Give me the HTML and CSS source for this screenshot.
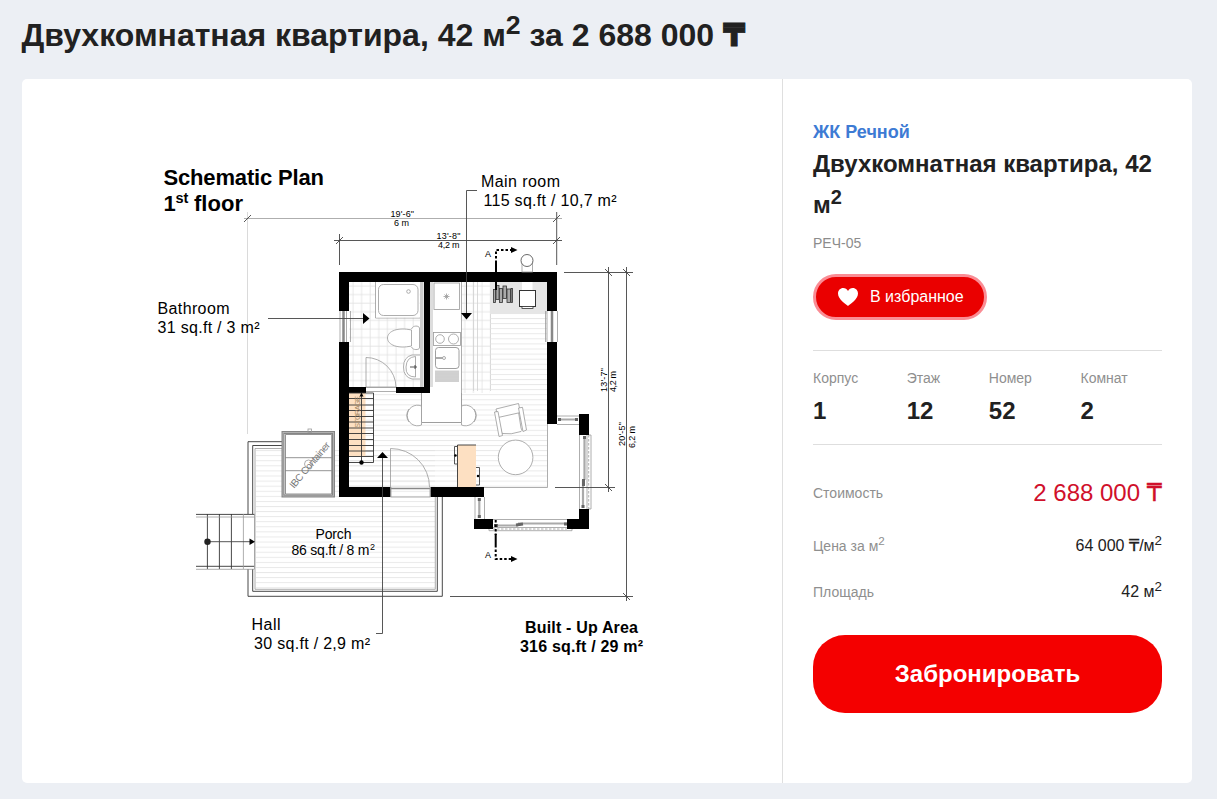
FILE: index.html
```html
<!DOCTYPE html>
<html lang="ru">
<head>
<meta charset="utf-8">
<title>Двухкомнатная квартира</title>
<link rel="stylesheet" href="styles.css">
</head>
<body>
<h1 class="page-title">Двухкомнатная квартира, 42 м<sup>2</sup> за 2 688 000 <span class="tenge">₸</span></h1>
<main class="card">
<section class="plan">
<svg class="plan-svg" viewBox="22 79 760 704" width="760" height="704">
<defs>
<pattern id="tile" x="349" y="282" width="8.6" height="8.6" patternUnits="userSpaceOnUse"><path d="M4 0V8.6M0 4H8.6" class="faint"/></pattern>
<pattern id="floor" x="0" y="282.5" width="20" height="5.08" patternUnits="userSpaceOnUse"><path d="M0 .5H20" class="faint"/></pattern>
</defs>
<!-- floors -->
<rect x="349" y="282" width="72" height="105" fill="url(#tile)"/>
<rect x="461" y="282" width="29" height="111" fill="url(#tile)"/>
<path d="M473.5 282V391M477.5 282V391M490.5 282V391" class="light"/>
<rect x="490" y="314" width="57" height="79" fill="url(#floor)"/>
<rect x="349" y="393" width="198" height="94" fill="url(#floor)"/>
<rect x="256" y="446" width="179" height="143" fill="url(#floor)"/>
<path d="M547.5 424V487.5H484" class="mid"/>
<rect x="490" y="282" width="57" height="32" fill="#e6e6e6"/>
<rect x="420" y="282" width="3.5" height="105" fill="#ccc"/>
<rect x="430" y="282" width="3" height="105" fill="#ddd"/>
<!-- porch -->
<path d="M282 441.7H248V514M248 569V596.3H442.3V497M282 445.5H252.7V514M252.7 569V591.3H437.3V497" class="dark"/>
<path d="M282 448.5H255V589.3H435.3V497" class="mid"/>
<path d="M196 514.4H254.500M196 566.3H254.500M207.400 514V569M219.400 514V569M231.400 514V569" class="dark"/>
<path d="M196 517H254.500M196 569.300H254.500M243.400 514V569M254.500 514V569" class="mid"/>
<path d="M207.500 541.700H250" class="line"/><circle cx="207.500" cy="541.700" r="3.200" fill="#222"/><path d="M249.500 538.500L255 541.700L249.500 545Z"/>
<!-- tank -->
<rect x="283" y="432.500" width="50.500" height="63.500" fill="#fff" stroke="#858585" stroke-width="3"/>
<rect x="283" y="432.500" width="50.500" height="63.500" fill="none" stroke="#bbb" stroke-width=".8"/>
<path d="M285.500 434.500H331.700V494H285.500ZM285.500 457.700H331.700M285.500 470.700H331.700" class="tank-line"/>
<rect x="308" y="429" width="3.500" height="3.500" class="mid"/>
<circle cx="308.500" cy="464" r="4" class="mid"/>
<text transform="translate(294 489) rotate(-50)" font-size="10" textLength="57" fill="#777">IBC Container</text>
<!-- outer walls -->
<path d="M339 272H557V311H547V282H349V311H339ZM339 342H349V387H366V393H349V487H390.500V497H339ZM547 342H557V424H547ZM424 282H430V393H396V387H424ZM430.500 487H484V497H430.500ZM579 414H589V435H579ZM579 509H589V529H567V519H579ZM474 519H493V529H474Z"/>
<!-- windows and doors -->
<path d="M340 311V342M346.500 311V342M350.500 311V342M547 311V342M557.500 311V342M545.500 311V342M366 387.500H396M366 391.500H396" class="mid"/>
<path d="M343.500 311V342M552 311V342" stroke="#888" stroke-width="2.500"/>
<path d="M390.500 488.500H430.500" stroke="#888" stroke-width="1.500"/><path d="M390.500 497H430.500M391 487V497M430 487V497" class="mid"/>
<path d="M557 416H579M557 424.500H579M579.500 435V509M587 435V509M589 435H591V509H589M493 519.500H567M493 527.500H567M489 529V530.700H572V529M475 497V519M484.500 497V519" class="mid"/>
<path d="M558 419.500H578M584.500 436V480M583 480V508M494 525.500H518M518 523.500H567M479.300 498V518" stroke="#aaa" stroke-width="2.200" fill="none"/>
<path d="M558 419.500H561M575 419.500H578M584.500 436V439M583.500 479V486M583 505V508M494 525.500H498M516 525L523 524M564 524H567M479.300 498V501M479.300 515V518" stroke="#666" stroke-width="3"/>
<path d="M588.700 435V509M493 529H567" class="mid" stroke-dasharray="2.500 1.500"/>
<!-- bathroom -->
<path d="M375.500 282V318H420" class="mid"/><rect x="376" y="282.500" width="43.500" height="35" fill="#fff"/>
<rect x="378.500" y="284.500" width="39.500" height="31" rx="5" class="fix"/><circle cx="408.500" cy="291.500" r="1.800" class="fix"/>
<path d="M411.500 330C398 327 387.500 331 387.500 338S398 349 411.500 346ZM411.500 329C413 325 419 325.500 419.500 328V348C419 350 413 350.500 411.500 347" class="fix"/>
<path d="M420 355L412 355Q403.500 357 403.500 367T412 379L420 379M415.500 356.500Q406.500 357 406 367T415.500 377Z" class="fix"/><path d="M410 367H417M415 365V369" class="line"/>
<path d="M366 387V357.500A30 30 0 0 1 396 387Z" class="fix clear"/>
<!-- kitchen -->
<rect x="433" y="282" width="28.500" height="111" fill="#fff" stroke="none"/>
<path d="M461.500 282V422.500H421.500V393" class="mid"/>
<rect x="434" y="283" width="25.500" height="26.500" class="fix"/><path d="M443.500 296.500H449.500M446.500 293.500V299.500M444.500 294.500L448.500 298.500M448.500 294.500L444.500 298.500" class="mid"/>
<rect x="433.500" y="332.500" width="27" height="13" class="fix"/><circle cx="440" cy="339" r="4.300" class="fix"/><circle cx="453.500" cy="339" r="5" class="fix"/>
<rect x="435.500" y="347.500" width="23.500" height="21" rx="3" class="fix strong"/><path d="M436 358H443" class="line"/><circle cx="444" cy="358" r="1.500" class="fix"/>
<rect x="435" y="370.500" width="24" height="11.500" fill="#d0d0d0"/><path d="M435 372.500H459M435 375.500H459M435 378.500H459" class="light"/>
<path d="M430 393.500H461V422H422V393.500Z" fill="#fff"/><path d="M461.500 393V422.500H421.500V393" class="mid"/>
<path d="M421.500 406A10.300 10.300 0 1 0 421.500 425V422.500Z" class="fix"/><path d="M461.500 406A10.300 10.300 0 1 1 461.500 425V422.500Z" class="fix"/>
<path d="M409 409Q404.500 415.500 409 422M474 409Q478.500 415.500 474 422" class="fix clear"/>
<!-- stove and firewood -->
<rect x="522" y="260" width="10.500" height="12" class="fix"/><rect x="522" y="282" width="10.500" height="10" fill="#fff"/>
<circle cx="527" cy="260.500" r="6" fill="#fff" stroke="#444" stroke-width=".8"/>
<rect x="519.500" y="290.500" width="16" height="16" fill="#fff" stroke="#333"/><rect x="522" y="306.500" width="11" height="2" fill="#fff" stroke="#333" stroke-width=".8"/>
<g fill="#aaa" stroke="#333" stroke-width=".8"><rect x="493.500" y="289.500" width="2" height="13"/><rect x="496" y="285.500" width="3" height="14"/><rect x="499.500" y="288.500" width="3" height="14"/><rect x="503" y="286" width="3.500" height="12.500"/><rect x="507" y="289" width="3.500" height="13.500"/><rect x="511" y="288.500" width="1.500" height="14"/></g>
<!-- storage stair -->
<rect x="349" y="393" width="16.500" height="63" fill="#fde0c2"/>
<path d="M349 393H373.500V462.500H349M349 398.500H373.500M349 405H373.500M349 410.500H373.500M349 416.500H373.500M349 422H373.500M349 428H373.500M349 433.500H373.500M349 439.500H373.500M349 445.500H373.500M349 451H373.500M349 456.500H373.500M361.500 462V395" class="dark"/>
<text transform="translate(359.500 428) rotate(-90)" font-size="7.500" textLength="32" fill="#a78b69">STORAGE</text>
<circle cx="361.500" cy="462.500" r="2.200"/><path d="M359.500 396.500L361.500 392.500L363.500 396.500Z"/>
<path d="M390.500 487V448.500A39 38.500 0 0 1 429.500 487" class="fix clear"/>
<!-- cabinet -->
<rect x="457.500" y="445" width="18.500" height="42" fill="#fde0c2"/><path d="M457.500 487V445H476" class="dark"/>
<path d="M457 446.500H454.500V464H457M476 467.500H479.500V485H476" class="line"/><circle cx="455.500" cy="455.500" r="1.200"/><circle cx="478" cy="476" r="1.200"/>
<!-- armchair and table -->
<circle cx="515.600" cy="457.400" r="17.300" class="fix"/>
<path d="M496 411.500L517.500 405.500L521 428Q523 431 521 431.500Q511 435 502 433.500Z" class="fix"/>
<path d="M496 409L518.500 403.500L520.500 412.500L498 417.500Z" class="fix"/>
<path d="M494.500 412L498 411.500L502.500 435.500L499 436.500ZM518.500 408L522.500 407.300L526.500 430L523 431.500Z" class="fix"/>
<!-- dimensions -->
<path d="M247.500 212V434" class="light"/><path d="M244 218.500H562" class="mid"/>
<path d="M334 240.500H562M339.500 234V265M556.700 212V265M564 272.500H633M555 487.500H615M450 596.500H633M608.500 267V492M626.500 267V601" class="line"/>
<path d="M244 222L251 215M336 244L343 237M553 222L560 215M553 244L560 237M605 269L612 276M623 269L630 276M605 484L612 491M623 593L630 600" class="line"/>
<!-- leaders -->
<path d="M268 318.500H364M477 190.500H466.500V314M382.500 457V633.500H376" class="line"/>
<path d="M363 313L369.500 318.500L363 324ZM461 313H472L466.500 319.500ZM377 458H388L382.500 452Z"/>
<!-- section marks -->
<path d="M496 263V250H512M495.700 545V559H512M495.700 520V535" fill="none" stroke="#000" stroke-width="2" stroke-dasharray="2.500 2"/>
<path d="M496 263V272M495.700 534V545M496 282V290" stroke="#000" stroke-width="2"/>
<path d="M511 247L517.500 250L511 253ZM511 556L517.500 559L511 562Z"/>
<!-- captions -->
<g font-size="16">
<g font-weight="bold"><text x="163.500" y="185" font-size="22" textLength="160.500">Schematic Plan</text><text x="163.500" y="210.500" font-size="22">1</text><text x="175.500" y="202.500" font-size="14.500">st</text><text x="194" y="210.500" font-size="22" textLength="49">floor</text>
<text x="525" y="633" textLength="113">Built - Up Area</text><text x="520" y="652" textLength="123">316 sq.ft / 29 m²</text></g>
<text x="481" y="187" textLength="79">Main room</text><text x="483.500" y="206" textLength="133">115 sq.ft / 10,7 m²</text>
<text x="157.500" y="314" textLength="72">Bathroom</text><text x="157.500" y="333" textLength="102">31 sq.ft / 3 m²</text>
<text x="251.500" y="630" textLength="29">Hall</text><text x="254" y="649" textLength="116">30 sq.ft / 2,9 m²</text>
</g>
<text x="315.500" y="539" font-size="14" textLength="36">Porch</text><text x="291.500" y="555" font-size="14" textLength="78">86 sq.ft / 8 m</text><text x="370" y="550" font-size="9">2</text>
<g font-size="9"><text x="390.500" y="216.500" textLength="23.500">19'-6"</text><text x="394" y="226" textLength="15">6 m</text><text x="436.500" y="239" textLength="24">13'-8"</text><text x="438" y="248" textLength="21.500">4,2 m</text><text x="485" y="257">A</text><text x="485" y="558">A</text>
<text transform="translate(607 392) rotate(-90)" textLength="24">13'-7"</text><text transform="translate(616 392) rotate(-90)" textLength="21">4,2 m</text><text transform="translate(625 446) rotate(-90)" textLength="24">20'-5"</text><text transform="translate(634.500 448) rotate(-90)" textLength="22">6,2 m</text></g>
</svg>
</section>
<aside class="info">
<a class="complex">ЖК Речной</a>
<h2 class="name">Двухкомнатная квартира, 42 м<sup>2</sup></h2>
<div class="code">РЕЧ-05</div>
<button class="favorite"><svg class="heart" width="20" height="18" viewBox="0 0 20 18"><path fill="#fff" d="M10 18C8.500 16.800 0 11.500 0 5.600C0 2.300 2.300 0 5.200 0C7.300 0 9 1.200 10 3C11 1.200 12.700 0 14.800 0C17.700 0 20 2.300 20 5.600C20 11.500 11.500 16.800 10 18Z"/></svg><span>В избранное</span></button>
<dl class="facts">
<div><dt>Корпус</dt><dd>1</dd></div>
<div><dt>Этаж</dt><dd>12</dd></div>
<div><dt>Номер</dt><dd>52</dd></div>
<div><dt>Комнат</dt><dd>2</dd></div>
</dl>
<dl class="prices">
<div class="row total"><dt>Стоимость</dt><dd>2 688 000 <span class="tenge">₸</span></dd></div>
<div class="row"><dt>Цена за м<sup>2</sup></dt><dd>64 000 <span class="tenge">₸</span>/м<sup>2</sup></dd></div>
<div class="row"><dt>Площадь</dt><dd>42 м<sup>2</sup></dd></div>
</dl>
<button class="book">Забронировать</button>
</aside>
</main>
</body>
</html>
```
FILE: styles.css
```css
* { box-sizing: border-box; }
body {
  margin: 0;
  height: 799px;
  padding: 0 25px 16px 22px;
  background: #eceff4;
  color: #212121;
  font-family: "Liberation Sans", Arial, sans-serif;
  overflow: hidden;
}
dl, dd, h1, h2 { margin: 0; }
sup { line-height: 0; }
.tenge { font-family: "DejaVu Sans", sans-serif; line-height: 0; -webkit-text-stroke: .3px currentColor; }
.page-title { height: 79px; margin-left: -.5px; padding-top: 15px; font-size: 32px; line-height: 40px; white-space: nowrap; }
.page-title .tenge { -webkit-text-stroke-width: .8px; }
.card { display: flex; height: 704px; background: #fff; border-radius: 5px; }
.plan { width: 760px; }
.plan-svg { display: block; }
.info { flex: 1; padding: 42px 30px 0; border-left: 1px solid #dfdfdf; }
.complex { display: block; color: #3d7bd4; font-size: 18px; font-weight: bold; line-height: 22px; }
.name { font-size: 24px; line-height: 41px; }
.code { margin-top: 8px; color: #8c8c8c; font-size: 14px; line-height: 20px; }
.favorite {
  display: flex;
  align-items: center;
  gap: 12px;
  width: 174px;
  height: 46px;
  margin-top: 21px;
  padding: 0 0 0 22px;
  border: 3px solid #fa8c94;
  border-radius: 23px;
  background: #ea0000;
  color: #fff;
  font: 16px "Liberation Sans", Arial, sans-serif;
}
.facts {
  display: flex;
  gap: 48.6px;
  height: 95px;
  margin-top: 30px;
  padding-top: 18px;
  border-top: 1px solid #dedede;
  border-bottom: 1px solid #dedede;
}
dt { color: #8f8f8f; font-size: 14px; line-height: 18px; }
.facts dd { margin-top: 9px; font-size: 24px; font-weight: bold; line-height: 30px; }
.prices { padding-top: 31px; }
.row { display: flex; align-items: center; justify-content: space-between; height: 46px; }
.row dd { font-size: 16px; line-height: 20px; }
.total { height: 34px; margin-bottom: 13px; }
.total dd { color: #d0102b; font-size: 24px; line-height: 28px; }
.book {
  display: block;
  width: 100%;
  height: 78px;
  margin-top: 20px;
  border: 0;
  border-radius: 32px;
  background: #f40000;
  color: #fff;
  font: bold 24px "Liberation Sans", Arial, sans-serif;
}
.faint { fill: none; stroke: #e2e2e2; stroke-width: .8; }
.light { fill: none; stroke: #d0d0d0; stroke-width: .8; }
.mid { fill: none; stroke: #999; stroke-width: .8; }
.dark { fill: none; stroke: #333; stroke-width: .9; }
.tank-line { fill: none; stroke: #777; stroke-width: .8; }
.line { fill: none; stroke: #444; stroke-width: .9; }
.fix { fill: #fff; stroke: #999; stroke-width: .8; }
.clear { fill: none; }
.strong { stroke: #888; }
```
